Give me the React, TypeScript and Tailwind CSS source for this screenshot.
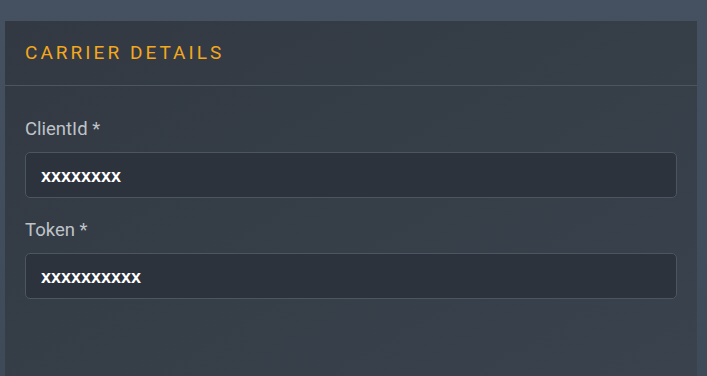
import React from 'react';

const fields = [
    { label: 'ClientId', value: 'xxxxxxxx' },
    { label: 'Token', value: 'xxxxxxxxxx' },
];

export default function App() {
    return (
        <div className="w-[707px] h-[376px] overflow-hidden bg-gradient-to-b from-[#455161] to-[#3f4a59] pt-[21px] pl-[5px] pr-[10px]">
            <div className="h-[400px] bg-gradient-to-br from-[#323942] to-[#3a434e] font-['Roboto',sans-serif]">
                <div className="px-5 pt-[18px] pb-[19px] border-b border-[#4d555f]">
                    <h2 className="text-[19px] leading-[27px] tracking-[0.16em] text-[#f5a81c] font-normal">CARRIER DETAILS</h2>
                </div>
                <div className="px-5 pt-[28px] flex flex-col gap-[17px]">
                    {fields.map(f => (
                        <div key={f.label}>
                            <label className="block pt-[2px] text-[18.5px] leading-[27px] text-[#bfc3c9] mb-[9px]">{f.label} *</label>
                            <input
                                type="text"
                                defaultValue={f.value}
                                className="w-full h-[46px] px-[15px] pt-[2px] bg-[#2d333c] border border-[#4d5560] rounded-[5px] text-white text-[18px] font-bold font-['Liberation_Sans',Arial,sans-serif] outline-none"
                            />
                        </div>
                    ))}
                </div>
            </div>
        </div>
    );
}
